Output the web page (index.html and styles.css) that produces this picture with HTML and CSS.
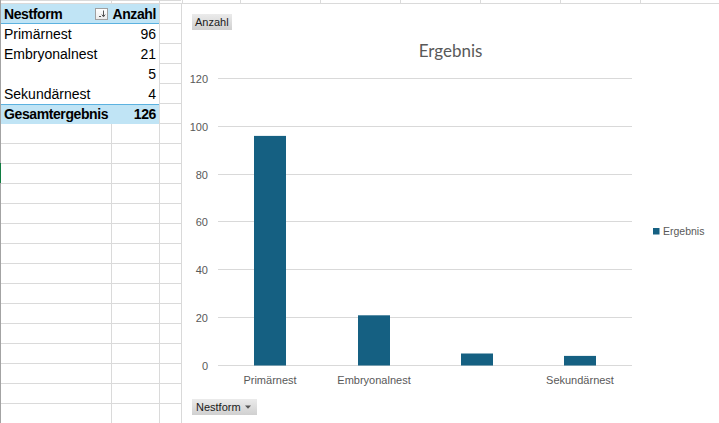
FILE: index.html
```html
<!DOCTYPE html>
<html lang="de">
<head>
<meta charset="utf-8">
<title>Nestform Pivot</title>
<link rel="stylesheet" href="styles.css">
</head>
<body>
<div class="sheet">
  <div class="grid-pane">
    <span class="active-row"></span>
    <div class="pivot">
      <div class="cell head label">
        <span>Nestform</span>
        <span class="filter-btn">
          <svg width="11" height="10" viewBox="0 0 11 10">
            <path d="M3 7.5h2" stroke="#555" stroke-width="1" fill="none"/>
            <path d="M7.5 1.5v6" stroke="#555" stroke-width="1" fill="none"/>
            <path d="M5.8 5.6L7.5 7.8L9.2 5.6" stroke="#555" stroke-width="1" fill="none"/>
          </svg>
        </span>
      </div>
      <div class="cell head num">Anzahl</div>
      <div class="cell">Primärnest</div>
      <div class="cell num">96</div>
      <div class="cell">Embryonalnest</div>
      <div class="cell num">21</div>
      <div class="cell"></div>
      <div class="cell num">5</div>
      <div class="cell">Sekundärnest</div>
      <div class="cell num">4</div>
      <div class="cell total">Gesamtergebnis</div>
      <div class="cell total num">126</div>
    </div>
  </div>
  <div class="chart-pane">
    <div class="top-strip"></div>
    <div class="chart">
      <div class="chart-head"><span class="field-btn">Anzahl</span></div>
      <div class="chart-title">Ergebnis</div>
      <svg class="plot" width="537" height="330" viewBox="0 0 537 330">
        <g class="gridlines">
          <line x1="36" x2="450" y1="17.5" y2="17.5"/>
          <line x1="36" x2="450" y1="65.5" y2="65.5"/>
          <line x1="36" x2="450" y1="113.5" y2="113.5"/>
          <line x1="36" x2="450" y1="160.5" y2="160.5"/>
          <line x1="36" x2="450" y1="208.5" y2="208.5"/>
          <line x1="36" x2="450" y1="256.5" y2="256.5"/>
          <line x1="36" x2="450" y1="304.5" y2="304.5"/>
        </g>
        <g class="bars">
          <rect x="72" y="74.9" width="32" height="229.6"/>
          <rect x="176" y="254.3" width="32" height="50.2"/>
          <rect x="279" y="292.5" width="32" height="12"/>
          <rect x="382" y="294.9" width="32" height="9.6"/>
        </g>
        <g class="axis-label y-labels">
          <text x="26" y="21.5">120</text>
          <text x="26" y="69.5">100</text>
          <text x="26" y="117.5">80</text>
          <text x="26" y="164.5">60</text>
          <text x="26" y="212.5">40</text>
          <text x="26" y="260.5">20</text>
          <text x="26" y="308.5">0</text>
        </g>
        <g class="axis-label x-labels">
          <text x="88" y="323">Primärnest</text>
          <text x="192" y="323">Embryonalnest</text>
          <text x="398" y="323">Sekundärnest</text>
        </g>
        <g class="legend">
          <rect class="legend-key" x="471" y="167" width="6.5" height="6.5"/>
          <text class="axis-label legend-text" x="481" y="173.5">Ergebnis</text>
        </g>
      </svg>
      <div class="chart-foot">
        <span class="field-btn dropdown">Nestform
          <svg class="caret" width="6" height="4" viewBox="0 0 6 4"><path d="M0 0.5h6L3 3.8z" fill="#555"/></svg>
        </span>
      </div>
    </div>
  </div>
</div>
</body>
</html>
```
FILE: styles.css
```css
html, body {
  margin: 0;
  padding: 0;
  background: #ffffff;
}
body {
  width: 719px;
  height: 423px;
  overflow: hidden;
  font-family: "Liberation Sans", Arial, sans-serif;
  color: #000;
}
.sheet {
  display: flex;
  height: 423px;
}
.grid-pane {
  position: relative;
  width: 180px;
  flex: none;
  border-left: 1px solid #a3a3a3;
  background:
    linear-gradient(90deg, transparent 110px, #dadada 110px 111px, transparent 111px 158px, #dadada 158px 159px, transparent 159px),
    repeating-linear-gradient(180deg, #dadada 0 1px, transparent 1px 20px) 0 3px;
}
.active-row {
  position: absolute;
  left: -1px;
  top: 163px;
  width: 1px;
  height: 20px;
  background: #107c41;
}
.pivot {
  margin-top: 4px;
  width: 158px;
  display: grid;
  grid-template-columns: 111px 47px;
  grid-auto-rows: 20px;
  font-size: 14px;
  line-height: 20px;
}
.cell {
  background: #ffffff;
  padding-left: 3px;
  white-space: nowrap;
  overflow: hidden;
}
.cell.num {
  text-align: right;
  padding-left: 0;
  padding-right: 3px;
}
.cell.head {
  background: #c0e4f5;
  box-shadow: inset 0 -1px 0 #5cb2e0;
  font-weight: bold;
  letter-spacing: -0.4px;
}
.cell.total {
  background: #c0e4f5;
  box-shadow: inset 0 1px 0 #5cb2e0;
  font-weight: bold;
  letter-spacing: -0.4px;
}
.head.label {
  display: flex;
  align-items: center;
}
.filter-btn {
  margin-left: auto;
  margin-right: 4px;
  width: 11px;
  height: 10px;
  border: 1px solid #a0a0a0;
  background: linear-gradient(#ffffff, #ececec);
  display: flex;
}
.chart-pane {
  width: 538px;
  flex: none;
  display: flex;
  flex-direction: column;
}
.top-strip {
  height: 3px;
  border-bottom: 1px solid #dadada;
  background: repeating-linear-gradient(90deg, #dadada 0 1px, transparent 1px 80px) 59px 0;
}
.chart {
  flex: 1;
  border-left: 1px solid #d9d9d9;
  background: #ffffff;
  display: flex;
  flex-direction: column;
}
.chart-head {
  padding: 8px 0 0 10px;
  height: 16px;
}
.field-btn {
  display: inline-flex;
  align-items: center;
  height: 16px;
  padding: 0 3px;
  font-size: 11px;
  line-height: 16px;
  color: #1a1a1a;
  background: linear-gradient(#ebebeb, #d0d0d0);
}
.field-btn.dropdown {
  padding: 0 6px 0 4px;
  gap: 4px;
}
.caret {
  display: block;
}
.chart-title {
  margin-top: 13px;
  line-height: 20px;
  font-family: Lato, "Liberation Sans", sans-serif;
  font-size: 17px;
  color: #595959;
  text-align: center;
}
.plot {
  display: block;
}
.gridlines line {
  stroke: #d9d9d9;
  stroke-width: 1;
}
.bars rect, .legend-key {
  fill: #156082;
}
.axis-label {
  font-family: "Liberation Sans", Arial, sans-serif;
  font-size: 11px;
  fill: #595959;
}
.legend .legend-text {
  font-size: 10.5px;
}
.y-labels text {
  text-anchor: end;
}
.x-labels text {
  text-anchor: middle;
}
.chart-foot {
  margin-top: 6px;
  padding-left: 10px;
}
```
